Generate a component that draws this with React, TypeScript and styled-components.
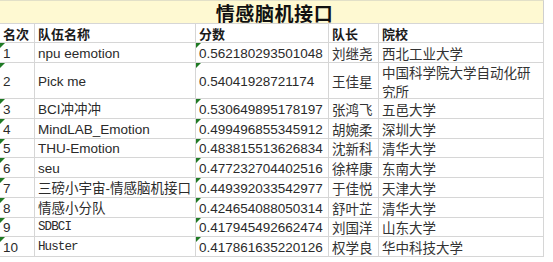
import styled, { createGlobalStyle, css } from "styled-components";

const GlobalStyle = createGlobalStyle`
  html, body {
    margin: 0;
    padding: 0;
    background: #ffffff;
  }
  body {
    font-family: "Liberation Sans", "Noto Sans CJK SC", sans-serif;
    color: #222;
  }
`;

type Team = {
  rank: string;
  name: string;
  score: string;
  leader: string;
  school: string;
  mono?: boolean;
  tall?: boolean;
};

const teams: Team[] = [
  { rank: "1", name: "npu eemotion", score: "0.562180293501048", leader: "刘继尧", school: "西北工业大学" },
  { rank: "2", name: "Pick me", score: "0.54041928721174", leader: "王佳星", school: "中国科学院大学自动化研究所", tall: true },
  { rank: "3", name: "BCI冲冲冲", score: "0.530649895178197", leader: "张鸿飞", school: "五邑大学" },
  { rank: "4", name: "MindLAB_Emotion", score: "0.499496855345912", leader: "胡婉柔", school: "深圳大学" },
  { rank: "5", name: "THU-Emotion", score: "0.483815513626834", leader: "沈新科", school: "清华大学" },
  { rank: "6", name: "seu", score: "0.477232704402516", leader: "徐梓康", school: "东南大学" },
  { rank: "7", name: "三磅小宇宙-情感脑机接口", score: "0.449392033542977", leader: "于佳悦", school: "天津大学" },
  { rank: "8", name: "情感小分队", score: "0.424654088050314", leader: "舒叶芷", school: "清华大学" },
  { rank: "9", name: "SDBCI", score: "0.417945492662474", leader: "刘国洋", school: "山东大学", mono: true },
  { rank: "10", name: "Huster", score: "0.417861635220126", leader: "权学良", school: "华中科技大学", mono: true },
];

export default function App() {
  return (
    <>
      <GlobalStyle />
      <Sheet>
        <Title>情感脑机接口</Title>
        <Head>名次</Head>
        <Head>队伍名称</Head>
        <Head>分数</Head>
        <Head>队长</Head>
        <Head>院校</Head>
        {teams.map((t) => (
          <Row key={t.rank}>
            <Cell $flag>{t.rank}</Cell>
            <Cell $mono={t.mono}>{t.name}</Cell>
            <Cell $flag>{t.score}</Cell>
            <Cell $cjk>{t.leader}</Cell>
            <Cell $cjk $wrap>
              <SchoolText>{t.school}</SchoolText>
            </Cell>
          </Row>
        ))}
      </Sheet>
    </>
  );
}

const Sheet = styled.div`
  display: grid;
  grid-template-columns: 35px 161px 133px 50px 165px;
  grid-template-rows: 24px 19px 20px 36px repeat(8, 19.75px);
  width: 544px;
`;

const Title = styled.div`
  grid-column: 1 / -1;
  display: flex;
  align-items: center;
  justify-content: center;
  padding: 1px 0 0 6px;
  box-sizing: border-box;
  background: #fef9d2;
  border-top: 1px solid #e2e0c8;
  border-bottom: 1px solid #d6d6d6;
  border-right: 1px solid #cfcfcf;
  font-family: "Noto Sans CJK SC", sans-serif;
  font-weight: 700;
  font-size: 19px;
  color: #111;
  letter-spacing: 0.6px;
`;

const cellBase = css`
  box-sizing: border-box;
  display: flex;
  align-items: center;
  padding: 0 3px;
  border-right: 1px solid #d6d6d6;
  border-bottom: 1px solid #d6d6d6;
  overflow: hidden;
  white-space: nowrap;
`;

const Head = styled.div`
  ${cellBase}
  padding-top: 1px;
  font-family: "Noto Sans CJK SC", sans-serif;
  font-weight: 700;
  font-size: 13px;
  color: #1a1a1a;
`;

const Row = styled.div`
  display: contents;
`;

const SchoolText = styled.span`
  display: block;
  width: 100%;
  word-break: break-all;
`;

const Cell = styled.div<{ $flag?: boolean; $mono?: boolean; $wrap?: boolean; $cjk?: boolean }>`
  ${cellBase}
  position: relative;
  padding-top: 2px;
  font-size: 13.5px;
  line-height: 19px;
  color: #2a2a2a;
  font-family: "Liberation Sans", "Noto Sans CJK SC", sans-serif;
  ${(p) =>
    p.$mono &&
    css`
      font-family: "Liberation Mono", "Noto Sans CJK SC", monospace;
      font-size: 12.5px;
      letter-spacing: -0.9px;
    `}
  ${(p) =>
    p.$cjk &&
    css`
      font-family: "Noto Sans CJK SC", sans-serif;
      color: #333;
    `}
  ${(p) =>
    p.$wrap &&
    css`
      white-space: normal;
      padding-right: 2px;
    `}
  ${(p) =>
    p.$flag &&
    css`
      &::before {
        content: "";
        position: absolute;
        left: 0;
        top: 0;
        border-top: 5px solid #1f7a24;
        border-right: 5px solid transparent;
      }
    `}
`;
